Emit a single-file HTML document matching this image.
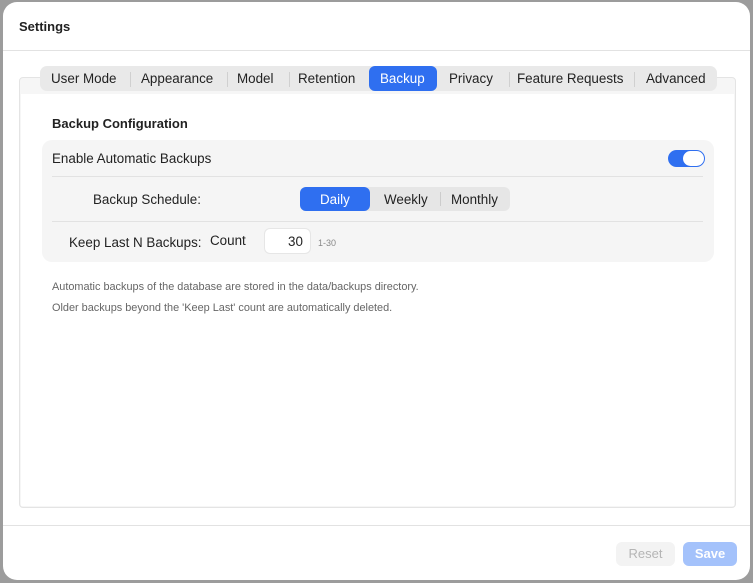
<!DOCTYPE html>
<html><head><meta charset="utf-8"><style>
*{box-sizing:border-box;margin:0;padding:0}
body{width:753px;height:583px;background:#9c9c9c;font-family:"Liberation Sans",sans-serif;position:relative;overflow:hidden;color:#222}
.win{position:absolute;left:3px;top:2px;width:747px;height:578px;background:#fff;border-radius:14px;overflow:hidden}
.a{position:absolute}
.t{font-size:13.4px;color:#222;white-space:nowrap}
</style></head><body>
<div class="win">
 <div class="a" style="left:16px;top:17px;font-size:13px;font-weight:bold;color:#222">Settings</div>
 <div class="a" style="left:0;top:48px;width:747px;height:1px;background:#e2e2e2"></div>
 <div class="a" style="left:16px;top:75px;width:717px;height:431px;background:#f6f6f6;border:1px solid #e4e4e4;border-radius:4px"></div>
 <div class="a" style="left:18px;top:92px;width:713px;height:412px;background:#fff"></div>
 <div class="a" style="left:37px;top:64px;width:677px;height:25px;background:#e9e9e9;border-radius:7px"></div>
 <div class="a" style="left:366px;top:64px;width:68px;height:25px;background:#2f6ff0;border-radius:6px"></div>
 <div class="a t" style="left:48px;top:69px">User Mode</div>
 <div class="a" style="left:224px;top:70px;width:1px;height:15px;background:#d0d0d0"></div>
 <div class="a" style="left:286px;top:70px;width:1px;height:15px;background:#d0d0d0"></div>
 <div class="a" style="left:127px;top:70px;width:1px;height:15px;background:#d0d0d0"></div>
 <div class="a" style="left:506px;top:70px;width:1px;height:15px;background:#d0d0d0"></div>
 <div class="a" style="left:631px;top:70px;width:1px;height:15px;background:#d0d0d0"></div>
 <div class="a t" style="left:138px;top:69px">Appearance</div>
 <div class="a t" style="left:234px;top:69px">Model</div>
 <div class="a t" style="left:295px;top:69px">Retention</div>
 <div class="a t" style="left:377px;top:69px;color:#fff">Backup</div>
 <div class="a t" style="left:446px;top:69px">Privacy</div>
 <div class="a t" style="left:514px;top:69px">Feature Requests</div>
 <div class="a t" style="left:643px;top:69px">Advanced</div>
 <div class="a" style="left:49px;top:114px;font-size:13px;font-weight:bold;color:#222">Backup Configuration</div>
 <div class="a" style="left:39px;top:138px;width:672px;height:122px;background:#f5f5f5;border-radius:10px"></div>
 <div class="a t" style="left:49px;top:149px">Enable Automatic Backups</div>
 <div class="a" style="left:665px;top:148px;width:37px;height:17px;background:#2f6ff0;border-radius:9px"></div>
 <div class="a" style="left:680px;top:149px;width:21px;height:15px;background:#fff;border-radius:8px"></div>
 <div class="a" style="left:49px;top:174px;width:651px;height:1px;background:#e2e2e2"></div>
 <div class="a t" style="left:90px;top:190px">Backup Schedule:</div>
 <div class="a" style="left:297px;top:185px;width:210px;height:24px;background:#e6e6e6;border-radius:6px"></div>
 <div class="a" style="left:297px;top:185px;width:70px;height:24px;background:#2f6ff0;border-radius:6px"></div>
 <div class="a t" style="left:317px;top:190px;color:#fff">Daily</div>
 <div class="a t" style="left:381px;top:190px">Weekly</div>
 <div class="a" style="left:437px;top:190px;width:1px;height:14px;background:#ccc"></div>
 <div class="a t" style="left:448px;top:190px">Monthly</div>
 <div class="a" style="left:49px;top:219px;width:651px;height:1px;background:#e2e2e2"></div>
 <div class="a t" style="left:66px;top:233px">Keep Last N Backups:</div>
 <div class="a t" style="left:207px;top:231px">Count</div>
 <div class="a" style="left:261px;top:226px;width:47px;height:26px;background:#fff;border:1px solid #e6e6e6;border-radius:6px"></div>
 <div class="a t" style="left:285px;top:232px">30</div>
 <div class="a" style="left:315px;top:236px;font-size:9px;color:#888">1-30</div>
 <div class="a" style="left:49px;top:279px;font-size:10.9px;color:#666;white-space:nowrap">Automatic backups of the database are stored in the data/backups directory.</div>
 <div class="a" style="left:49px;top:300px;font-size:10.9px;color:#666;white-space:nowrap">Older backups beyond the 'Keep Last' count are automatically deleted.</div>
 <div class="a" style="left:0;top:523px;width:747px;height:1px;background:#e2e2e2"></div>
 <div class="a" style="left:613px;top:540px;width:59px;height:24px;background:#f3f3f3;border-radius:6px;font-size:13px;color:#b5b5b5;text-align:center;line-height:24px">Reset</div>
 <div class="a" style="left:680px;top:540px;width:54px;height:24px;background:#a4c2fb;border-radius:6px;font-size:13px;font-weight:bold;color:#fff;text-align:center;line-height:24px">Save</div>
</div>
</body></html>
